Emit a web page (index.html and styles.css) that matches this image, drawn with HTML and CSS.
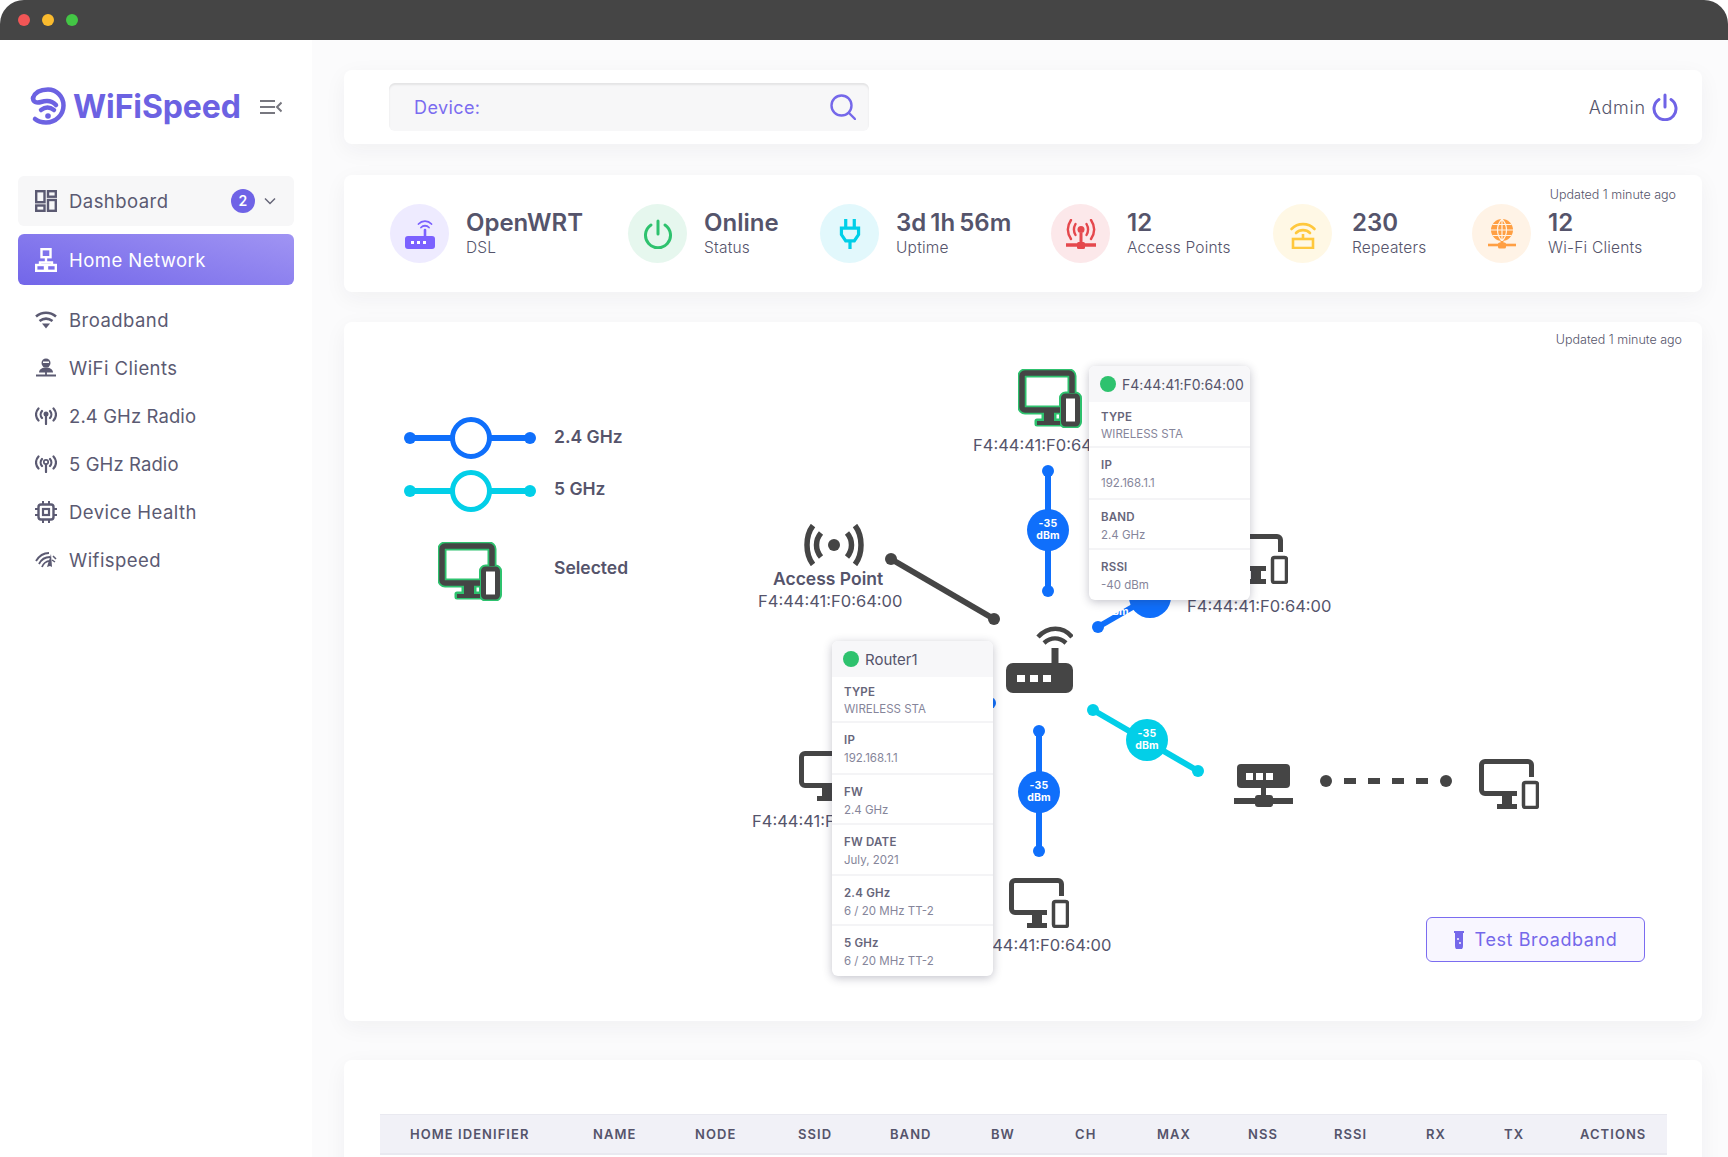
FILE: index.html
```html
<!DOCTYPE html>
<html lang="en">
  <head>
    <meta charset="UTF-8" />
    <meta name="viewport" content="width=device-width, initial-scale=1.0" />
    <title>WiFiSpeed – Home Network</title>
    <link rel="stylesheet" href="styles.css">
  </head>
  <body>
    <svg class="sprite" width="0" height="0">
      <symbol id="device" viewBox="0 0 60 50">
        <path d="M38 34.500H6a3.500 3.500 0 0 1-3.500-3.500V6A3.500 3.500 0 0 1 6 2.500h43A3.500 3.500 0 0 1 52.500 6v12" fill="none" stroke="#454545" stroke-width="5"/>
        <path d="M23 36h10v9h5v5H18v-5h5z" fill="#454545"/>
        <rect x="44.500" y="23.500" width="14" height="25" rx="2" fill="none" stroke="#454545" stroke-width="3.500"/>
      </symbol>
      <symbol id="device-selected" viewBox="0 0 64 59">
        <g fill="none" stroke="#2ec26e" stroke-width="9" stroke-linejoin="round">
          <path d="M42 41H7a3 3 0 0 1-3-3V7a3 3 0 0 1 3-3h44a3 3 0 0 1 3 3v17"/>
          <path d="M26 43h10v9h6v3H19v-3h7z" stroke-width="5"/>
          <rect x="45.500" y="27" width="14" height="28" rx="2"/>
        </g>
        <path d="M42 41H7a3 3 0 0 1-3-3V7a3 3 0 0 1 3-3h44a3 3 0 0 1 3 3v17" fill="none" stroke="#454545" stroke-width="5.500"/>
        <path d="M26 43h10v9h6v4H19v-4h7z" fill="#454545"/>
        <rect x="45.500" y="27" width="14" height="28" rx="2" fill="#fff" stroke="#454545" stroke-width="5"/>
      </symbol>
    </svg>

    <div class="titlebar">
      <span class="light light-red"></span>
      <span class="light light-yellow"></span>
      <span class="light light-green"></span>
    </div>

    <div class="app">
      <aside class="sidebar">
        <div class="brand">
          <svg class="brand-mark" viewBox="0 0 36 38" fill="none" stroke="#6c62e2" stroke-width="4.500" stroke-linecap="round">
            <path d="M3 11C5 5 11 2.500 18 2.500c8.500 0 15.500 7 15.500 16S26 35.500 16 35.500c-4 0-8-1-11-3.500"/>
            <path d="M3 11c0 4 3.500 5.500 8 4 5-1.700 11-1.500 15 3"/>
            <path d="M11 23c4-3 9-3 13 0"/>
            <circle cx="18" cy="29" r="2.800" fill="#6c62e2" stroke="none"/>
          </svg>
          <span class="brand-name">WiFiSpeed</span>
          <svg class="brand-toggle" viewBox="0 0 22 14" fill="none" stroke="#77777f" stroke-width="2">
            <path d="M0 1h15M0 7h15M0 13h15M21.500 2.500L17 7l4.500 4.500"/>
          </svg>
        </div>

        <nav class="menu">
          <a class="menu-item menu-open">
            <svg class="menu-icon" viewBox="0 0 22 22" fill="none" stroke="currentColor" stroke-width="2.400">
              <rect x="1.200" y="1.200" width="8.300" height="11"/>
              <rect x="13" y="1.200" width="7.800" height="5.500"/>
              <rect x="1.200" y="15.500" width="8.300" height="5.300"/>
              <rect x="13" y="10" width="7.800" height="10.800"/>
            </svg>
            Dashboard
            <span class="menu-badge">2</span>
            <svg class="menu-chevron" viewBox="0 0 12 8" fill="none" stroke="#666678" stroke-width="1.500"><path d="M1 1.500l5 5 5-5"/></svg>
          </a>
          <a class="menu-item menu-active">
            <svg class="menu-icon" viewBox="0 0 22 24" fill="none" stroke="currentColor" stroke-width="2.400">
              <rect x="6.500" y="1.200" width="9" height="8"/>
              <path d="M11 9v5M5 18v-3.500h12V18"/>
              <rect x="1.200" y="17" width="8.800" height="5.800"/>
              <rect x="12" y="17" width="8.800" height="5.800"/>
            </svg>
            Home Network
          </a>
          <a class="menu-item">
            <svg class="menu-icon" viewBox="0 0 22 18" fill="none" stroke="currentColor" stroke-width="2.600">
              <path d="M1 5.500c6-5 14-5 20 0M4.500 10c4-3 9-3 13 0"/>
              <path d="M7 12.500h8l-4 5z" fill="currentColor" stroke="none"/>
            </svg>
            Broadband
          </a>
          <a class="menu-item">
            <svg class="menu-icon" viewBox="0 0 22 20">
              <circle cx="11" cy="5" r="4.500" fill="currentColor"/>
              <path d="M4 14.500c0-3 3-5 7-5s7 2 7 5z" fill="currentColor"/>
              <path d="M11 14v3M1 17.500h20" stroke="currentColor" stroke-width="1.800"/>
              <rect x="8" y="3.500" width="6" height="1.500" fill="#fff"/>
            </svg>
            WiFi Clients
          </a>
          <a class="menu-item">
            <svg class="menu-icon" viewBox="0 0 22 18" fill="none" stroke="currentColor" stroke-width="2.200" stroke-linecap="round">
              <path d="M3.500 1.500c-3.300 3.500-3.300 8.500 0 12M18.500 1.500c3.300 3.500 3.300 8.500 0 12M7 4c-1.800 2-1.800 5 0 7M15 4c1.800 2 1.800 5 0 7M11 9v8"/>
              <circle cx="11" cy="7" r="2.500" fill="currentColor" stroke="none"/>
            </svg>
            <span class="menu-radio">2.4 GHz Radio</span>
          </a>
          <a class="menu-item">
            <svg class="menu-icon" viewBox="0 0 22 18" fill="none" stroke="currentColor" stroke-width="2.200" stroke-linecap="round">
              <path d="M3.500 1.500c-3.300 3.500-3.300 8.500 0 12M18.500 1.500c3.300 3.500 3.300 8.500 0 12M7 4c-1.800 2-1.800 5 0 7M15 4c1.800 2 1.800 5 0 7M11 9.500v7.500"/>
              <circle cx="11" cy="7" r="2.200" stroke-width="1.700"/>
            </svg>
            <span class="menu-radio">5 GHz Radio</span>
          </a>
          <a class="menu-item">
            <svg class="menu-icon" viewBox="0 0 22 22" fill="none" stroke="currentColor" stroke-width="2.400">
              <rect x="3.500" y="3.500" width="15" height="15" rx="2.500"/>
              <rect x="8" y="8" width="6" height="6" stroke-width="2.200"/>
              <path d="M8 0v4M14 0v4M8 18v4M14 18v4M0 8h4M0 14h4M18 8h4M18 14h4" stroke-width="2"/>
            </svg>
            Device Health
          </a>
          <a class="menu-item">
            <svg class="menu-icon" viewBox="0 0 22 16" fill="none" stroke="currentColor" stroke-width="1.800">
              <path d="M1 9c3-5 8-8 13-8M4 12c2-4 6-7 11-7M7 15c1-3 4-6 8-6"/>
              <path d="M16 2l-4 13 3-1 2 1z" fill="currentColor" stroke="none"/>
              <path d="M18 4l3 3M17 8l3 2" stroke-width="1.500"/>
            </svg>
            Wifispeed
          </a>
        </nav>
      </aside>

      <main class="content">
        <header class="card topbar">
          <div class="search">
            <span class="search-label">Device:</span>
            <svg class="search-icon" viewBox="0 0 26 26" fill="none" stroke="#7568ea" stroke-width="2.400" stroke-linecap="round">
              <circle cx="11.500" cy="11.500" r="10"/>
              <path d="M19 19l6 6"/>
            </svg>
          </div>
          <div class="user">
            Admin
            <svg class="user-icon" viewBox="0 0 26 28" fill="none" stroke="#6f63e6" stroke-width="3" stroke-linecap="round">
              <path d="M13 2v12M7 6.500a11 11 0 1 0 12 0"/>
            </svg>
          </div>
        </header>

        <section class="card stats">
          <span class="updated">Updated 1 minute ago</span>
          <div class="stat">
            <span class="stat-circle circle-purple">
              <svg class="stat-icon" viewBox="0 0 30 30" fill="none" stroke="#7b61ff" stroke-width="1.800" stroke-linecap="round">
                <path d="M13.500 5a9 9 0 0 1 13 0M16 8.500a5.500 5.500 0 0 1 8 0"/>
                <path d="M20 11v7" stroke-width="2.600"/>
                <rect y="17" width="30" height="13" rx="3" fill="#7b61ff" stroke="none"/>
                <path d="M6 22h3v3H6zM12 22h3v3h-3zM18 22h3v3h-3z" fill="#fff" stroke="none"/>
              </svg>
            </span>
            <div class="stat-text"><strong>OpenWRT</strong><span>DSL</span></div>
          </div>
          <div class="stat">
            <span class="stat-circle circle-green">
              <svg class="stat-icon" viewBox="0 0 28 30" fill="none" stroke="#2ec26e" stroke-width="3" stroke-linecap="round">
                <path d="M14 2v13M7 6a12.500 12.500 0 1 0 14 0"/>
              </svg>
            </span>
            <div class="stat-text"><strong>Online</strong><span>Status</span></div>
          </div>
          <div class="stat">
            <span class="stat-circle circle-cyan">
              <svg class="stat-icon" viewBox="0 0 20 28" fill="none" stroke="#00cfe8" stroke-width="3">
                <path d="M6 0v9M14 0v9M2 8.500h16v6l-4 6H6l-4-6zM10 20v8"/>
              </svg>
            </span>
            <div class="stat-text"><strong>3d 1h 56m</strong><span>Uptime</span></div>
          </div>
          <div class="stat">
            <span class="stat-circle circle-red">
              <svg class="stat-icon" viewBox="0 0 30 30" fill="none" stroke="#e5484d" stroke-width="2.400" stroke-linecap="round">
                <path d="M5 1c-4 6-4 13 0 19M25 1c4 6 4 13 0 19M9.500 5c-2 3.500-2 7.500 0 11M20.500 5c2 3.500 2 7.500 0 11"/>
                <circle cx="15" cy="10.500" r="3.500" fill="#e5484d" stroke="none"/>
                <path d="M15 14v12" stroke-width="3" stroke-linecap="butt"/>
                <path d="M0 26h30" stroke-width="3.500" stroke-linecap="butt"/>
                <rect x="11" y="23" width="8" height="7" rx="1.500" fill="#e5484d" stroke="none"/>
              </svg>
            </span>
            <div class="stat-text"><strong>12</strong><span>Access Points</span></div>
          </div>
          <div class="stat stat-wide">
            <span class="stat-circle circle-yellow">
              <svg class="stat-icon" viewBox="0 0 26 30" fill="none" stroke="#ffc83d" stroke-width="2.600" stroke-linecap="round">
                <path d="M1.500 10a16 16 0 0 1 23 0M6 14a10 10 0 0 1 14 0"/>
                <path d="M13 15v6" stroke-linecap="butt"/>
                <rect x="3" y="20" width="20" height="9" stroke-linecap="butt"/>
              </svg>
            </span>
            <div class="stat-text"><strong>230</strong><span>Repeaters</span></div>
          </div>
          <div class="stat">
            <span class="stat-circle circle-orange">
              <svg class="stat-icon" viewBox="0 0 28 30">
                <circle cx="14" cy="11" r="11" fill="#ff9f43"/>
                <path d="M14 0c-6 6-6 16 0 22M14 0c6 6 6 16 0 22M14 0v22M3 11h22M4.500 5.500h19M4.500 16.500h19" fill="none" stroke="#fff3e6" stroke-width="1.200"/>
                <path d="M14 22v4" stroke="#ff9f43" stroke-width="3"/>
                <path d="M0 26h28" stroke="#ff9f43" stroke-width="2.600"/>
                <rect x="10" y="23.500" width="8" height="6" rx="1.500" fill="#ff9f43"/>
              </svg>
            </span>
            <div class="stat-text"><strong>12</strong><span>Wi-Fi Clients</span></div>
          </div>
        </section>

        <section class="card topology">
          <span class="updated updated-map">Updated 1 minute ago</span>

          <div class="legend">
            <svg class="legend-line link-blue" viewBox="0 0 132 42">
              <path d="M6 21h120"/>
              <circle class="link-end" cx="6" cy="21" r="6"/>
              <circle class="link-end" cx="126" cy="21" r="6"/>
              <circle class="legend-ring" cx="67" cy="21" r="18.500"/>
            </svg>
            <span class="legend-label">2.4 GHz</span>
            <svg class="legend-line link-cyan" viewBox="0 0 132 42">
              <path d="M6 21h120"/>
              <circle class="link-end" cx="6" cy="21" r="6"/>
              <circle class="link-end" cx="126" cy="21" r="6"/>
              <circle class="legend-ring" cx="67" cy="21" r="18.500"/>
            </svg>
            <span class="legend-label legend-label-5g">5 GHz</span>
            <svg class="legend-device"><use href="#device-selected"/></svg>
            <span class="legend-label legend-label-selected">Selected</span>
          </div>

          <svg class="links" viewBox="0 0 1357 699">
            <g class="link-dark">
              <path d="M547 237L650 297"/>
              <circle class="link-end" cx="547" cy="237" r="6"/>
              <circle class="link-end" cx="650" cy="297" r="6"/>
            </g>
            <g class="link-blue">
              <path d="M704 149V269"/>
              <circle class="link-end" cx="704" cy="149" r="6"/>
              <circle class="link-end" cx="704" cy="269" r="6"/>
              <path d="M754 305L806 275"/>
              <circle class="link-end" cx="754" cy="305" r="6"/>
              <path d="M695 409V529"/>
              <circle class="link-end" cx="695" cy="409" r="6"/>
              <circle class="link-end" cx="695" cy="529" r="6"/>
              <path d="M646 381L600 410"/>
              <circle class="link-end" cx="646" cy="381" r="6"/>
            </g>
            <g class="link-cyan">
              <path d="M749 388L854 449"/>
              <circle class="link-end" cx="749" cy="388" r="6"/>
              <circle class="link-end" cx="854" cy="449" r="6"/>
            </g>
            <g class="link-dark">
              <path class="link-dashed" d="M1000 459H1090"/>
              <circle class="link-end" cx="982" cy="459" r="6"/>
              <circle class="link-end" cx="1102" cy="459" r="6"/>
            </g>
          </svg>

          <div class="bubble bubble-top">-35<br>dBm</div>
          <div class="bubble bubble-diag"><span>-35<br>dBm</span></div>
          <div class="bubble bubble-cyan">-35<br>dBm</div>
          <div class="bubble bubble-bottom">-35<br>dBm</div>

          <svg class="node node-selected"><use href="#device-selected"/></svg>
          <svg class="node node-device node-right"><use href="#device"/></svg>
          <svg class="node node-device node-left"><use href="#device"/></svg>
          <svg class="node node-device node-bottom"><use href="#device"/></svg>
          <svg class="node node-device node-far"><use href="#device"/></svg>

          <svg class="node node-ap" viewBox="0 0 60 42" fill="none" stroke="#454545" stroke-width="5.500">
            <path d="M9 1.500C1 12 1 30 9 40.500M51 1.500C59 12 59 30 51 40.500M17 9c-6 7-6 17 0 24M43 9c6 7 6 17 0 24"/>
            <circle cx="30" cy="21" r="6" fill="#454545" stroke="none"/>
          </svg>
          <svg class="node node-router" viewBox="0 0 67 67" fill="none" stroke="#454545" stroke-width="4.500">
            <path d="M32 11c10-11 25-11 34 0M38 17c7-6 15-6 22 0"/>
            <path d="M49 22v16" stroke-width="7"/>
            <rect y="37" width="67" height="30" rx="7" fill="#454545" stroke="none"/>
            <path d="M11 49h8v7h-8zM24 49h8v7h-8zM37 49h8v7h-8z" fill="#fff" stroke="none"/>
          </svg>
          <svg class="node node-net" viewBox="0 0 59 43" fill="#454545">
            <rect x="3" width="53" height="24" rx="4"/>
            <path d="M12 9h7v7h-7zM22 9h7v7h-7zM32 9h7v7h-7z" fill="#fff"/>
            <path d="M27 24h5v10h-5zM0 34h59v6H0z"/>
            <rect x="21" y="31" width="18" height="12" rx="3"/>
          </svg>

          <span class="mac mac-top">F4:44:41:F0:64:00</span>
          <span class="mac mac-right">F4:44:41:F0:64:00</span>
          <span class="mac mac-left">F4:44:41:F0:64:00</span>
          <span class="mac mac-bottom">F4:44:41:F0:64:00</span>
          <strong class="ap-name">Access Point</strong>
          <span class="mac mac-ap">F4:44:41:F0:64:00</span>

          <div class="tip tip-device">
            <div class="tip-head"><span class="tip-dot"></span>F4:44:41:F0:64:00</div>
            <div class="tip-row tip-first"><b>TYPE</b><span>WIRELESS STA</span></div>
            <div class="tip-row tip-wide"><b>IP</b><span>192.168.1.1</span></div>
            <div class="tip-row"><b>BAND</b><span>2.4 GHz</span></div>
            <div class="tip-row tip-last"><b>RSSI</b><span>-40 dBm</span></div>
          </div>

          <div class="tip tip-router">
            <div class="tip-head"><span class="tip-dot"></span>Router1</div>
            <div class="tip-row tip-first"><b>TYPE</b><span>WIRELESS STA</span></div>
            <div class="tip-row tip-wide"><b>IP</b><span>192.168.1.1</span></div>
            <div class="tip-row"><b>FW</b><span>2.4 GHz</span></div>
            <div class="tip-row tip-tall"><b>FW DATE</b><span>July, 2021</span></div>
            <div class="tip-row"><b>2.4 GHz</b><span>6 / 20 MHz TT-2</span></div>
            <div class="tip-row tip-last"><b>5 GHz</b><span>6 / 20 MHz TT-2</span></div>
          </div>

          <button class="test-btn">
            <svg class="test-icon" viewBox="0 0 10 18">
              <path d="M0 0h10v2H9v13a4 4 0 0 1-8 0V2H0z" fill="#7568ea"/>
              <circle cx="4" cy="8" r="1" fill="#f8f6ff"/>
              <circle cx="6" cy="12" r="1" fill="#f8f6ff"/>
            </svg>
            Test Broadband
          </button>
        </section>

        <section class="card devices">
          <div class="table-head">
            <span>Home Idenifier</span>
            <span>Name</span>
            <span>Node</span>
            <span>SSID</span>
            <span>Band</span>
            <span>BW</span>
            <span>CH</span>
            <span>Max</span>
            <span>NSS</span>
            <span>RSSI</span>
            <span>RX</span>
            <span>TX</span>
            <span>Actions</span>
          </div>
        </section>
      </main>
    </div>
  </body>
</html>
```

FILE: styles.css
```css
/* ------------ Global ------------ */
* {
  margin: 0;
  padding: 0;
  box-sizing: border-box;
}
html,
body {
  height: 100%;
  overflow: hidden;
}
body {
  font-family: Inter, "Noto Sans", sans-serif;
  background: #fff;
  color: #55546b;
  display: flex;
  flex-direction: column;
}
.sprite {
  position: absolute;
}

/* ------------ Window chrome ------------ */
.titlebar {
  flex: 0 0 40px;
  display: flex;
  align-items: center;
  gap: 12px;
  padding-left: 18px;
  background: #454545;
  border-radius: 24px 24px 0 0;
}
.light {
  width: 12px;
  height: 12px;
  border-radius: 50%;
}
.light-red {
  background: #f25656;
}
.light-yellow {
  background: #fabb2e;
}
.light-green {
  background: #43c645;
}

.app {
  flex: 1;
  display: flex;
  min-height: 0;
}

/* ------------ Sidebar ------------ */
.sidebar {
  flex: 0 0 312px;
  padding: 40px 18px 0;
  background: #fff;
}
.brand {
  height: 52px;
  margin-bottom: 44px;
  padding-left: 12px;
  display: flex;
  align-items: center;
}
.brand-mark {
  width: 36px;
  height: 38px;
}
.brand-name {
  margin-left: 7px;
  font-size: 32px;
  font-weight: 700;
  letter-spacing: -0.1px;
  color: #6c62e2;
}
.brand-toggle {
  width: 22px;
  height: 14px;
  margin: 2px 0 0 19px;
}
.menu {
  display: flex;
  flex-direction: column;
}
.menu-item {
  height: 48px;
  display: flex;
  align-items: center;
  padding-left: 17px;
  font-size: 18.500px;
  letter-spacing: 0.45px;
  color: #5b5a72;
}
.menu-radio {
  letter-spacing: 0.1px;
}
.menu-icon {
  flex: 0 0 22px;
  width: 22px;
  max-height: 24px;
  margin-right: 12px;
}
.menu-open {
  height: 50px;
  margin-bottom: 8px;
  background: #f7f7f8;
  border-radius: 6px;
}
.menu-active {
  height: 51px;
  margin-bottom: 11px;
  color: #fff;
  background: linear-gradient(195deg, #a094f3, #7266e9);
  border-radius: 6px;
}
.menu-badge {
  width: 24px;
  height: 24px;
  margin-left: auto;
  border-radius: 50%;
  background: #6f63e6;
  color: #fff;
  font-size: 14px;
  font-weight: 600;
  line-height: 24px;
  text-align: center;
}
.menu-chevron {
  width: 12px;
  height: 8px;
  margin: 0 18px 0 9px;
}

/* ------------ Main column ------------ */
.content {
  flex: 1;
  padding: 30px 26px 0 32px;
  background: #fbfbfc;
  min-width: 0;
}
.card {
  background: #fff;
  border-radius: 8px;
  box-shadow: 0 6px 22px rgba(30, 30, 60, 0.05);
}

.topbar {
  height: 74px;
  margin-bottom: 31px;
  padding: 0 24px 0 45px;
  display: flex;
  align-items: center;
  justify-content: space-between;
}
.search {
  width: 480px;
  height: 48px;
  padding: 0 13px 0 25px;
  display: flex;
  align-items: center;
  justify-content: space-between;
  background: #f7f7f8;
  border-radius: 6px;
  box-shadow: inset 0 2px 2px rgba(0, 0, 0, 0.08);
}
.search-label {
  font-size: 18px;
  letter-spacing: 0.4px;
  color: #7b6cf0;
}
.search-icon {
  width: 26px;
  height: 26px;
}
.user {
  display: flex;
  align-items: center;
  gap: 6px;
  font-size: 18px;
  font-weight: 300;
  letter-spacing: 0.8px;
}
.user-icon {
  width: 26px;
  height: 28px;
}

.updated {
  position: absolute;
  top: 12px;
  right: 26px;
  font-size: 12.500px;
  font-weight: 300;
}
.updated-map {
  top: 10px;
  right: 20px;
}

/* ------------ Stat strip ------------ */
.stats {
  position: relative;
  height: 117px;
  margin-bottom: 30px;
  padding-left: 46px;
  display: grid;
  grid-template-columns: 238px 192px 231px 222px 199px 1fr;
  align-items: center;
}
.stat {
  display: flex;
  align-items: center;
  gap: 17px;
}
.stat-wide {
  gap: 20px;
}
.stat-circle {
  flex: 0 0 59px;
  height: 59px;
  display: flex;
  align-items: center;
  justify-content: center;
  border-radius: 50%;
}
.stat-icon {
  width: 30px;
  height: 30px;
}
.circle-purple {
  background: #eeebff;
}
.circle-green {
  background: #e6f7ee;
}
.circle-cyan {
  background: #e2f8fc;
}
.circle-red {
  background: #fce8ea;
}
.circle-yellow {
  background: #fff8e5;
}
.circle-orange {
  background: #fff3e6;
}
.stat-text {
  display: flex;
  flex-direction: column;
}
.stat-text strong {
  font-size: 24px;
  font-weight: 600;
  line-height: 28px;
  word-spacing: -2px;
}
.stat-text span {
  font-size: 15.500px;
  font-weight: 300;
  letter-spacing: 0.2px;
  line-height: 22px;
}

/* ------------ Topology map ------------ */
.topology {
  position: relative;
  height: 699px;
  margin-bottom: 39px;
}
.legend {
  position: absolute;
  left: 60px;
  top: 95px;
  display: grid;
  grid-template-columns: 150px auto;
  row-gap: 11px;
  align-items: center;
}
.legend-line {
  width: 132px;
  height: 42px;
}
.legend-device {
  width: 64px;
  height: 59px;
  margin: 19px 0 0 34px;
}
.legend-label {
  margin-bottom: 3px;
  font-size: 17.500px;
  font-weight: 600;
}
.legend-label-5g {
  margin-bottom: 5px;
}
.legend-label-selected {
  margin: 10px 0 0;
}
.legend-ring {
  fill: #fff;
  stroke-width: 5;
}

.links {
  position: absolute;
  left: 0;
  top: 0;
  width: 1357px;
  height: 699px;
}
.links path,
.legend-line path {
  fill: none;
  stroke-width: 6;
}
.link-dashed {
  stroke-dasharray: 12 12;
}
.link-blue path,
.link-blue .legend-ring {
  stroke: #0f6ffb;
}
.link-blue .link-end {
  fill: #0f6ffb;
}
.link-cyan path,
.link-cyan .legend-ring {
  stroke: #02cfe8;
}
.link-cyan .link-end {
  fill: #02cfe8;
}
.link-dark path {
  stroke: #454545;
}
.link-dark .link-end {
  fill: #454545;
}

.bubble {
  position: absolute;
  width: 42px;
  height: 42px;
  display: flex;
  align-items: center;
  justify-content: center;
  border-radius: 50%;
  background: #0f6ffb;
  color: #fff;
  font-size: 10.500px;
  font-weight: 700;
  letter-spacing: 0.2px;
  line-height: 12.500px;
  text-align: center;
}
.bubble-top {
  left: 683px;
  top: 187px;
}
.bubble-diag {
  left: 785px;
  top: 254px;
}
.bubble-diag span {
  transform: translate(-33px, 9px);
}
.bubble-cyan {
  left: 782px;
  top: 397px;
  background: #02cfe8;
}
.bubble-bottom {
  left: 674px;
  top: 449px;
}

.node {
  position: absolute;
}
.node-selected {
  left: 674px;
  top: 47px;
  width: 64px;
  height: 59px;
}
.node-device {
  width: 60px;
  height: 50px;
}
.node-right {
  left: 884px;
  top: 212px;
}
.node-left {
  left: 455px;
  top: 429px;
}
.node-bottom {
  left: 665px;
  top: 556px;
}
.node-far {
  left: 1135px;
  top: 437px;
}
.node-ap {
  left: 460px;
  top: 202px;
  width: 60px;
  height: 42px;
}
.node-router {
  left: 662px;
  top: 304px;
  width: 67px;
  height: 67px;
}
.node-net {
  left: 890px;
  top: 442px;
  width: 59px;
  height: 43px;
}

.mac {
  position: absolute;
  font-size: 16.500px;
  line-height: 22px;
  white-space: nowrap;
}
.mac-top {
  left: 629px;
  top: 112px;
}
.mac-right {
  left: 843px;
  top: 273px;
}
.mac-left {
  left: 408px;
  top: 488px;
}
.mac-bottom {
  left: 623px;
  top: 612px;
}
.mac-ap {
  left: 414px;
  top: 268px;
}
.ap-name {
  position: absolute;
  left: 429px;
  top: 246px;
  font-size: 17.500px;
  font-weight: 600;
  line-height: 22px;
}

/* ------------ Tooltips ------------ */
.tip {
  position: absolute;
  width: 161px;
  background: #fff;
  border-radius: 6px;
  box-shadow: 0 2px 10px rgba(40, 40, 70, 0.28);
  overflow: hidden;
}
.tip-device {
  left: 745px;
  top: 44px;
}
.tip-router {
  left: 488px;
  top: 319px;
}
.tip-head {
  height: 36px;
  padding-left: 11px;
  display: flex;
  align-items: center;
  gap: 6px;
  background: #f7f7f9;
  font-size: 15px;
  white-space: nowrap;
}
.tip-device .tip-head {
  font-size: 14px;
  letter-spacing: -0.05px;
}
.tip-dot {
  flex: 0 0 16px;
  height: 16px;
  border-radius: 50%;
  background: #2ec26e;
}
.tip-row {
  height: 50px;
  padding: 9px 12px 0;
  display: flex;
  flex-direction: column;
  gap: 1px;
  border-bottom: 2px solid #f4f4f6;
  font-size: 11.500px;
  line-height: 17px;
}
.tip-row b {
  font-weight: 600;
  letter-spacing: 0.2px;
  color: #66657a;
}
.tip-row span {
  color: #85859a;
}
.tip-first {
  height: 46px;
  padding-top: 7px;
  gap: 0;
}
.tip-wide {
  height: 52px;
}
.tip-tall {
  height: 51px;
}
.tip-last {
  height: 50px;
  border-bottom: 0;
}

.test-btn {
  position: absolute;
  right: 57px;
  bottom: 59px;
  width: 219px;
  height: 45px;
  display: flex;
  align-items: center;
  justify-content: center;
  gap: 11px;
  border: 1.500px solid #7b6cf0;
  border-radius: 6px;
  background: #f8f6ff;
  color: #7568ea;
  font-family: inherit;
  font-size: 18px;
  letter-spacing: 0.6px;
}
.test-icon {
  width: 10px;
  height: 18px;
}

/* ------------ Device table ------------ */
.devices {
  height: 400px;
  padding: 54px 35px 0 36px;
}
.table-head {
  height: 41px;
  padding-left: 30px;
  display: grid;
  grid-template-columns: 183px 102px 103px 92px 101px 84px 82px 91px 86px 92px 78px 76px 1fr;
  align-items: center;
  background: #f1f1f7;
  border-top: 1px solid #e9e9f0;
  border-bottom: 2px solid #e9e9f0;
  font-size: 13px;
  font-weight: 600;
  letter-spacing: 1.05px;
  text-transform: uppercase;
  white-space: nowrap;
}
```
